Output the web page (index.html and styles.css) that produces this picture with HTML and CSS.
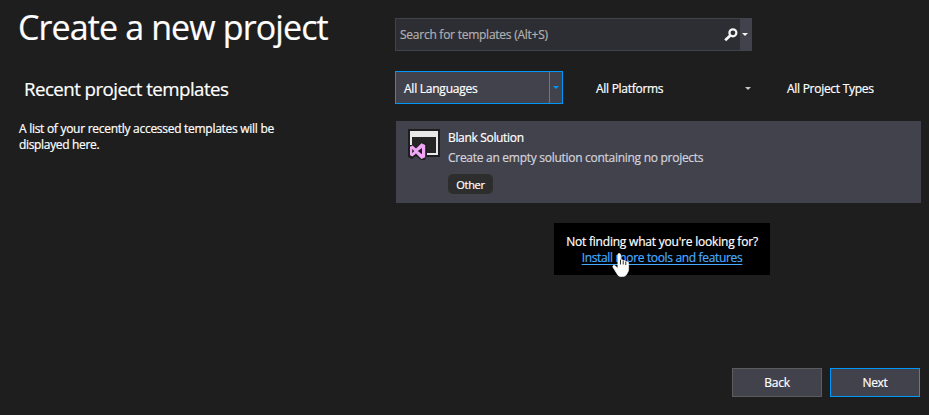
FILE: index.html
```html
<!DOCTYPE html>
<html lang="en">
<head>
<meta charset="utf-8">
<title>Create a new project</title>
<link rel="stylesheet" href="styles.css">
</head>
<body>
<div class="dialog">
  <aside class="recent">
    <h1>Create a new project</h1>
    <h2>Recent project templates</h2>
    <p>A list of your recently accessed templates will be<br><span class="recent-end">displayed here.</span></p>
  </aside>
  <main class="templates">
    <div class="search">
      <span class="search-text">Search for templates (Alt+S)</span>
      <svg class="search-icon" width="14" height="14" viewBox="0 0 14 14"><circle cx="8.9" cy="4.8" r="3.5" fill="none" stroke="#f5f5f5" stroke-width="2.2"/><path d="M6.3 7.5 1.2 12.2" stroke="#f5f5f5" stroke-width="2.8"/></svg>
      <span class="search-drop"><svg width="6" height="3" viewBox="0 0 6 3"><path d="M0 0h6L3 3z" fill="#f5f5f5"/></svg></span>
    </div>
    <div class="filters">
      <div class="filter active"><span class="languages">All Languages</span><span class="filter-drop"><svg width="6" height="3" viewBox="0 0 6 3"><path d="M0 0h6L3 3z" fill="#0097fb"/></svg></span></div>
      <div class="filter platforms"><span>All Platforms</span><svg width="6" height="3" viewBox="0 0 6 3"><path d="M0 0h6L3 3z" fill="#c8c8c8"/></svg></div>
      <div class="filter"><span>All Project Types</span></div>
    </div>
    <article class="template">
      <svg class="template-icon" width="32" height="32" viewBox="0 0 32 32">
        <path d="M0 0h32v28H18l-1 3h-4l-5-4-4 3-4-2z" fill="#1e1e1e"/>
        <path d="M2 2h28v24H19v-2h9V8H4v8H2z" fill="#e8e8e8"/>
        <path d="M4 8h24v16H19V15l-5-2-7 6-3-2z" fill="#252526"/>
        <path fill-rule="evenodd" d="M13.500 14.300 17.200 16v12.300L13.500 30 8 24.600l-3.500 2.800L2 26.200V17.800l2.500-1.200L8 19.400zM14 19l-4.200 3.100L14 25.200zM4.200 20v4.200l2-2.100z" fill="#efa6f5"/>
      </svg>
      <div class="template-info">
        <h3>Blank Solution</h3>
        <p>Create an empty solution containing no projects</p>
        <span class="tag">Other</span>
      </div>
    </article>
    <div class="more">
      <span class="question">Not finding what you're looking for?</span>
      <a href="#">Install more tools and features</a>
      <svg class="cursor" width="18" height="24" viewBox="0 0 17 23"><path d="M5.500 1.500C5.500.2 8 .2 8 1.500v5.200c1-.6 2.400-.2 2.600.7 1-.5 2.200 0 2.500.9 1.200-.5 2.700.1 2.700 1.500v5.700c0 2-.8 3-1.600 4.500-.8 1.600-2 2.500-4 2.500H8.500c-1.600 0-2.700-.7-3.600-2.200L.8 13.600c-.7-1.500 1.200-2.400 2.300-1.200l2.400 2.200z" fill="#fff" stroke="#fff" stroke-width=".6"/><path d="M8 6.500v4.500M10.600 7.400V11M13.100 8.300V11.500" stroke="#000" stroke-width=".8"/></svg>
    </div>
    <footer>
      <button type="button">Back</button>
      <button type="button" class="primary">Next</button>
    </footer>
  </main>
</div>
</body>
</html>
```
FILE: styles.css
```css
* { box-sizing: border-box; }
body {
  margin: 0;
  background: #1e1e1e;
  color: #fff;
  font: 12px/16px "Open Sans", "Noto Sans", sans-serif;
  letter-spacing: -0.22px;
  -webkit-text-stroke: 0.2px;
}
h1, h2, h3, p { margin: 0; font-weight: 400; }
svg { display: block; flex: none; }
.dialog { display: flex; height: 415px; overflow: hidden; }
.recent { width: 395px; padding: 4px 0 0 19px; white-space: nowrap; }
h1 { margin-left: -1px; font-size: 34px; line-height: 46px; letter-spacing: -0.88px; }
h2 { margin: 26px 0 0 5px; font-size: 18.7px; line-height: 26px; letter-spacing: -0.55px; }
.recent p { margin-top: 19px; letter-spacing: -0.28px; }
.recent .recent-end { letter-spacing: -0.33px; }
.templates { width: 526px; padding-top: 18px; display: flex; flex-direction: column; }
.search {
  display: flex;
  align-items: center;
  width: 357px;
  height: 33px;
  border: 1px solid #42424c;
  background: #2d2d34;
  color: #b0b0b0;
}
.search-text { flex: 1; padding-left: 4px; letter-spacing: -0.25px; }
.search-icon { margin-right: 2px; }
.search-drop {
  display: flex;
  align-items: center;
  align-self: stretch;
  width: 11px;
  padding-left: 2px;
  background: #42424c;
}
.filters { display: flex; margin-top: 20px; }
.filter { display: flex; align-items: center; height: 33px; padding-top: 2px; letter-spacing: -0.28px; }
.active {
  width: 168px;
  padding: 0 0 0 8px;
  border: 1px solid #0097fb;
  background: #42424c;
}
.languages { flex: 1; padding-top: 2px; letter-spacing: -0.24px; }
.filter-drop {
  display: flex;
  align-items: center;
  align-self: stretch;
  width: 13px;
  padding-left: 3px;
  border-left: 1px solid #0097fb;
}
.platforms { justify-content: space-between; width: 155px; margin: 0 36px 0 33px; }
.template {
  display: flex;
  height: 82px;
  margin: 17px 0 0 1px;
  padding: 8px 0 0 12px;
  background: #42424c;
}
.template-info { margin-left: 8px; }
h3 { font-size: 12px; line-height: 17px; letter-spacing: -0.33px; }
.template p { margin-top: 3px; line-height: 17px; color: #d2d2dc; letter-spacing: -0.28px; }
.tag {
  display: block;
  width: 45px;
  height: 20px;
  margin-top: 8px;
  border-radius: 5px;
  background: #2d2d2d;
  font-size: 11px;
  line-height: 21px;
  letter-spacing: -0.3px;
  text-align: center;
}
.more {
  position: relative;
  width: 216px;
  height: 52px;
  margin: 20px 0 0 159px;
  padding-top: 11px;
  background: #000;
  text-align: center;
  white-space: nowrap;
}
.question { display: block; letter-spacing: -0.21px; }
.more a { display: block; color: #48aaff; letter-spacing: -0.34px; text-underline-offset: 2px; }
.cursor { position: absolute; left: 58px; top: 30px; }
footer { display: flex; justify-content: flex-end; gap: 8px; margin: 93px 1px 0 0; }
button {
  width: 90px;
  height: 29px;
  padding: 1px 0 0;
  border: 1px solid #5c5c5c;
  background: #42424c;
  color: #fff;
  font: inherit;
  letter-spacing: -0.3px;
}
.primary { border-color: #0097fb; }
```
